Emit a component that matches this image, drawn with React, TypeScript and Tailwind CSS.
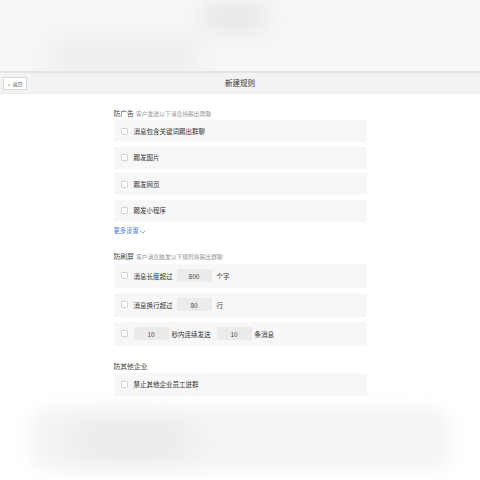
import React from "react";

const Box = () => (
  <span className="w-[7px] h-[7px] shrink-0 border border-[#d4d4d4] bg-white rounded-[1px]" />
);

const Input = ({ v }: { v: string }) => (
  <span className="w-[35px] h-[13px] bg-[#ebebeb] flex items-center justify-center text-[6.5px] text-[#444]">
    {v}
  </span>
);

const Row = ({ children, h }: { children: React.ReactNode; h: string }) => (
  <div className={`flex items-center bg-[#f7f7f7] pl-[7px] ${h}`}>
    <Box />
    <div className="flex items-center ml-[6px] text-[6.5px] text-[#333] leading-none whitespace-nowrap">{children}</div>
  </div>
);

export default function App() {
  return (
    <div
      className="w-[480px] h-[480px] bg-white overflow-hidden flex flex-col"
      style={{ fontFamily: '"Noto Sans CJK SC", "Noto Sans", sans-serif' }}
    >
      <div className="h-[71px] shrink-0 bg-[#f7f7f7] overflow-hidden flex flex-col">
        <div className="flex h-[40px] shrink-0">
          <div className="w-[200px]" />
          <div className="w-[70px] h-[34px] bg-[#e9e9e9] blur-[10px] rounded-full" />
        </div>
        <div className="flex h-[40px] shrink-0">
          <div className="w-[50px]" />
          <div className="w-[150px] h-[34px] bg-[#ececec] blur-[12px] rounded-full" />
        </div>
      </div>
      <div className="h-[23px] shrink-0 border-t-2 border-[#e4e4e4] bg-[#f3f3f3] grid grid-cols-[1fr_auto_1fr] items-center border-b border-b-[#ececec]">
        <div className="pl-[3px] flex items-center">
          <span className="flex items-center h-[13px] w-[24px] pl-[4px] border border-[#d8d8d8] bg-white text-[5px] text-[#666] leading-none gap-[2px]">
            <span>«</span>
            <span>返回</span>
          </span>
        </div>
        <div className="text-[7.5px] text-[#333] leading-none">新建规则</div>
        <div />
      </div>

      <div className="w-[253px] mx-auto flex flex-col pt-[13px]">
        <div className="h-[10px] flex items-end gap-[2px] leading-none mb-[3px]">
          <span className="text-[6.8px] text-[#444]">防广告</span>
          <span className="text-[5.8px] text-[#999]">客户发送以下消息将踢出群聊</span>
        </div>
        <div className="flex flex-col gap-[4.5px]">
          <Row h="h-[22px]">消息包含关键词踢出群聊</Row>
          <Row h="h-[22px]">踢发图片</Row>
          <Row h="h-[22px]">踢发网页</Row>
          <Row h="h-[22px]">踢发小程序</Row>
        </div>
        <div className="mt-[5px] h-[10px] flex items-center text-[6.3px] text-[#4a7bd0] leading-none">
          更多设置
          <svg width="6" height="4" viewBox="0 0 6 4" className="ml-[1px]">
            <path d="M0.5 0.8 L3 3.2 L5.5 0.8" fill="none" stroke="#4a7bd0" strokeWidth="0.7" />
          </svg>
        </div>

        <div className="mt-[13px] h-[10px] flex items-end gap-[2px] leading-none mb-[4px]">
          <span className="text-[6.8px] text-[#444]">防刷屏</span>
          <span className="text-[5.8px] text-[#999]">客户消息触发以下规则将踢出群聊</span>
        </div>
        <div className="flex flex-col gap-[4.5px]">
          <Row h="h-[24.5px]">
            <span>消息长度超过</span>
            <span className="ml-[4px]"><Input v="800" /></span>
            <span className="ml-[5px]">个字</span>
          </Row>
          <Row h="h-[24.5px]">
            <span>消息换行超过</span>
            <span className="ml-[4px]"><Input v="80" /></span>
            <span className="ml-[5px]">行</span>
          </Row>
          <Row h="h-[24.5px]">
            <span className="w-[36px] flex"><Input v="10" /></span>
            <span className="ml-[2px]">秒内连续发送</span>
            <span className="ml-[6px]"><Input v="10" /></span>
            <span className="ml-[3px]">条消息</span>
          </Row>
        </div>

        <div className="mt-[13.5px] h-[10px] flex items-end leading-none mb-[3px]">
          <span className="text-[6.8px] text-[#444]">防其他企业</span>
        </div>
        <Row h="h-[23px]">禁止其他企业员工进群</Row>
      </div>

      <div className="mt-[12px] h-[62px] mx-[30px] flex">
        <div className="w-full h-full bg-[#f4f4f4] blur-[8px] rounded-[20px] flex">
          <div className="ml-[40px] mt-[10px] w-[120px] h-[45px] bg-[#ebebeb] blur-[10px] rounded-full" />
        </div>
      </div>
    </div>
  );
}
